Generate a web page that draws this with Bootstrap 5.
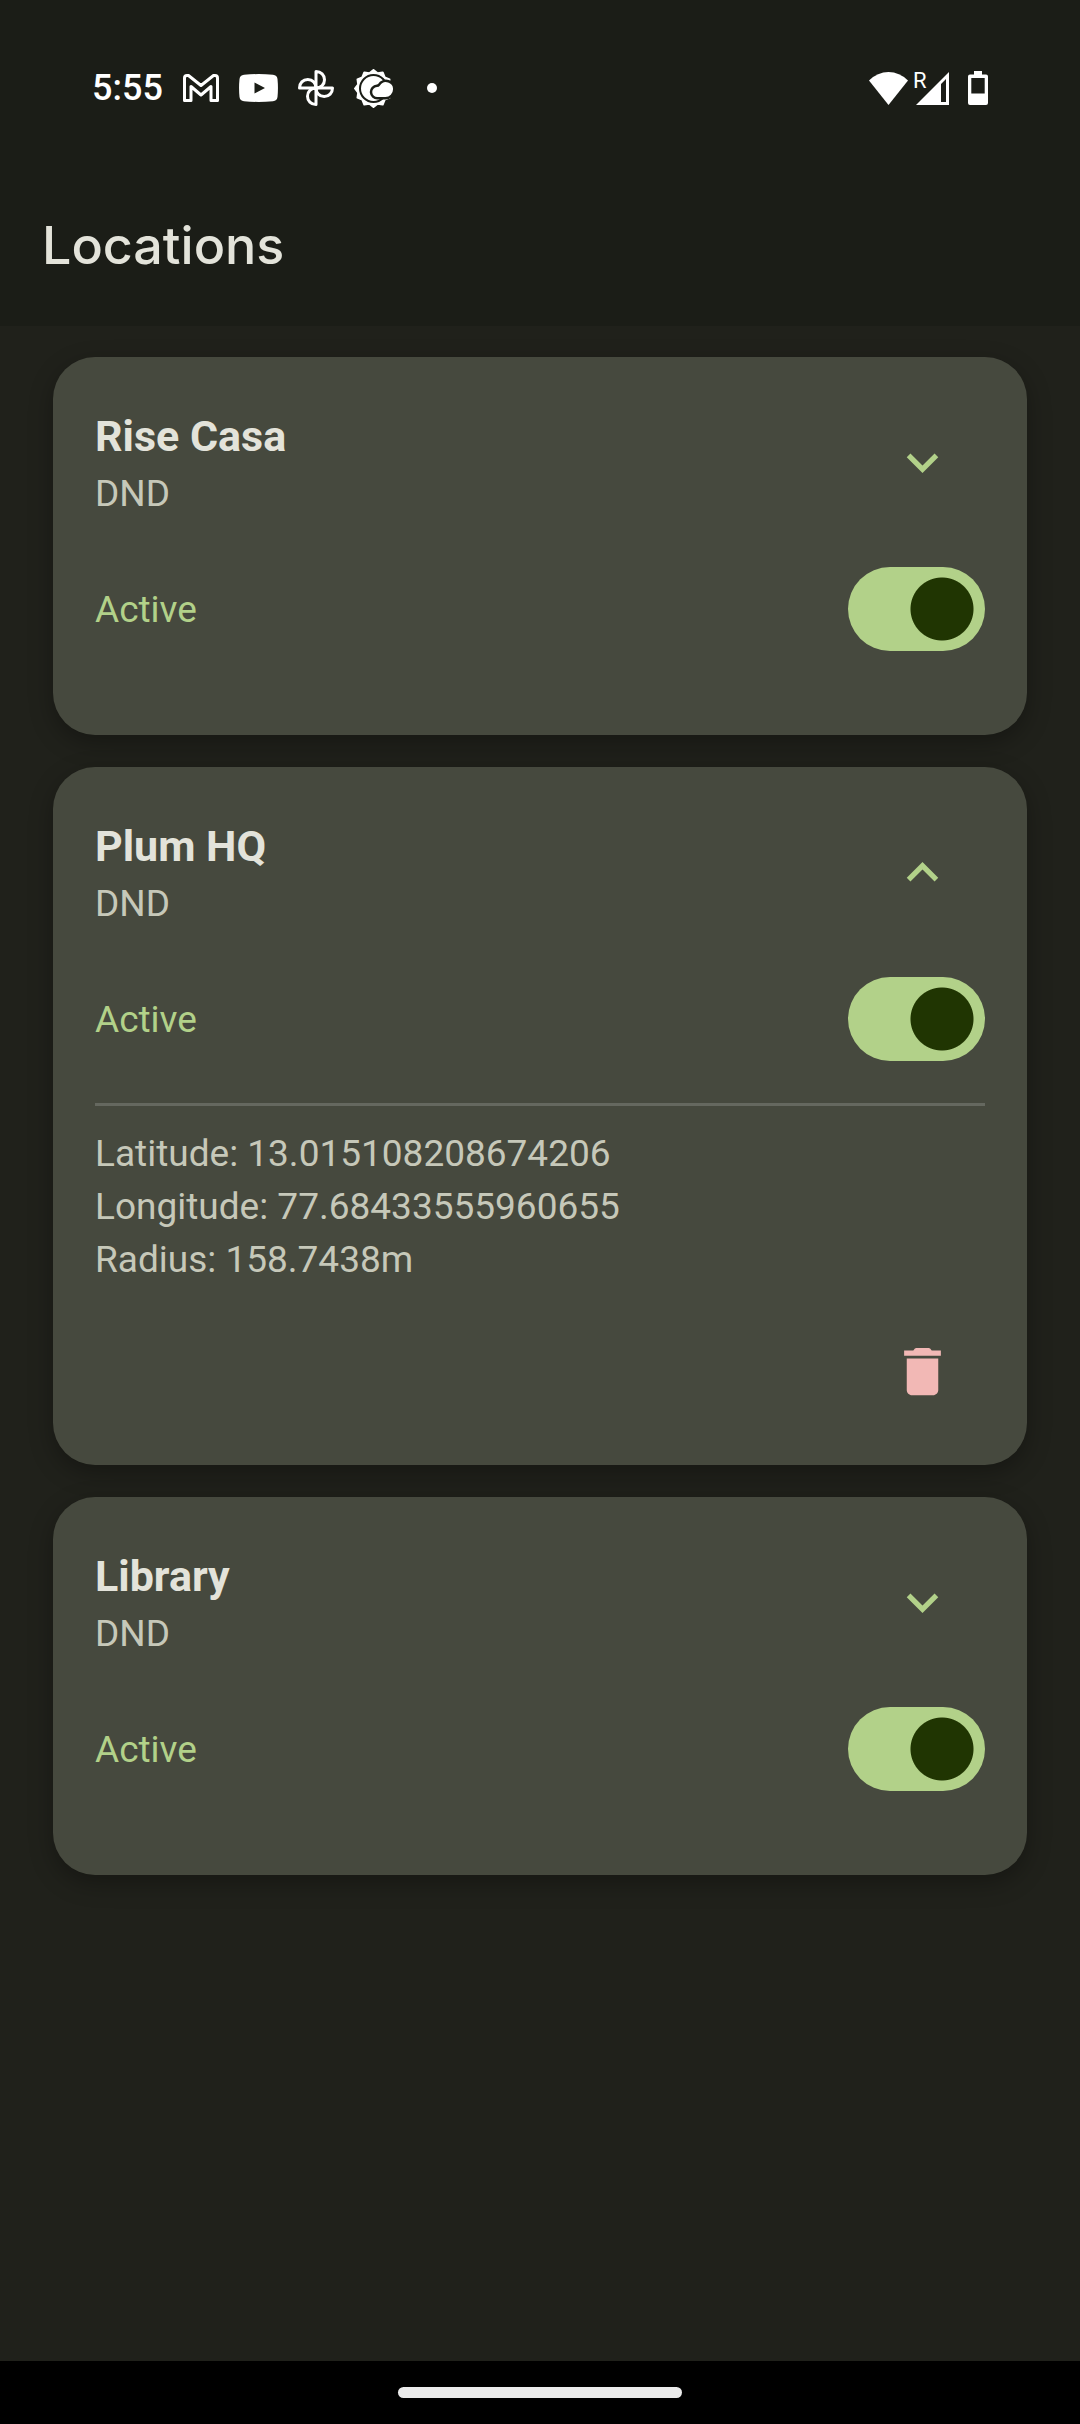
<!DOCTYPE html>
<html lang="en">
<head>
<meta charset="utf-8">
<meta name="viewport" content="width=device-width, initial-scale=1">
<title>Locations</title>
<link rel="stylesheet" href="https://cdn.jsdelivr.net/npm/bootstrap@5.3.0/dist/css/bootstrap.min.css">
<style>
  :root { --accent: #b2d189; --on-accent: #203502; --ink: #e3e3da; --ink-soft: #c6c8b9; }
  body { background: #20211b; color: var(--ink); font-family: Roboto, sans-serif; font-size: 37px; line-height: 53px; }
  .app-top { background: #1b1d17; height: 326px; }
  .status-row { height: 176px; padding: 0 92px; }
  .status-left { gap: 20px; }
  .clock { font: 500 36px/44px Roboto, sans-serif; color: #fff; }
  .more-dot { width: 10px; height: 10px; background: #fff; margin-left: 14px; }
  .status-right { gap: 19px; }
  .radio-icons { gap: 3px; }
  .page-title { font: 500 52px/64px Inter, sans-serif; padding: 38px 42px; }
  .place-list { padding: 31px 53px; gap: 32px; }
  .place { --bs-card-bg: #46493e; --bs-card-color: var(--ink-soft); --bs-card-border-width: 0; --bs-card-border-radius: 42px; --bs-card-spacer-x: 42px; --bs-card-spacer-y: 42px; box-shadow: 0 8px 24px rgba(0,0,0,.3); }
  .place-head { padding-top: 6px; }
  .place-name { font-size: 43px; line-height: 58px; font-weight: 700; color: var(--ink); }
  .place-mode { line-height: 58px; }
  .tool { --bs-btn-border-width: 0; --bs-btn-padding-x: 0; --bs-btn-padding-y: 0; width: 126px; height: 126px; color: var(--accent); line-height: 1; }
  .tool-delete { height: 104px; color: #f2b8b5; margin-top: 33px; }
  .tool:hover { color: var(--ink); }
  .active-row { padding: 42px 0; }
  .active-row label { color: var(--accent); }
  .place .form-switch { padding: 0; min-height: 0; }
  .place .form-check-input { float: none; display: block; width: 137px; height: 84px; margin: 0; border: 0; border-radius: 42px; background-color: #34362e; background-image: radial-gradient(circle at 42px 42px, #919283 31px, transparent 32px); background-position: 0 0; background-size: 100% 100%; }
  .place .form-check-input:checked { background-color: var(--accent); background-image: radial-gradient(circle at 94px 42px, var(--on-accent) 31px, transparent 32px); background-position: 0 0; }
  .details { border-top: 3px solid #65685f; padding-top: 21px; }
  .nav-strip { background: #000; height: 63px; }
  .nav-handle { width: 284px; height: 11px; background: #ebebeb; }
</style>
</head>
<body>
<div class="min-vh-100 d-flex flex-column">
  <header class="app-top">
    <div class="status-row d-flex align-items-center justify-content-between">
      <div class="status-left d-flex align-items-center">
        <span class="clock">5:55</span>
        <svg width="36" height="28" viewBox="0 0 36 28" fill="none" stroke="#fff" stroke-width="3" stroke-linejoin="round" aria-hidden="true"><path d="M1.500 26.500V4Q1.500 1.500 4 1.500H5.500L18 11.500 30.500 1.500H32Q34.500 1.500 34.500 4V26.500H28V12.500L18 21 8 12.500V26.500Z"/></svg>
        <svg width="39" height="28" viewBox="0 0 39 28" aria-hidden="true"><path fill="#fff" fill-rule="evenodd" d="M5 .8Q19.500-.6 34 .8 38 1.200 38.500 5 39.400 14 38.500 23 38 26.800 34 27.200 19.500 28.600 5 27.200 1 26.800.5 23-.4 14 .5 5 1 1.200 5 .8zM15.500 8.500v11L26 14z"/></svg>
        <svg width="36" height="36" viewBox="0 0 36 36" fill="none" stroke="#fff" stroke-width="3" stroke-linejoin="round" aria-hidden="true"><path id="blade" d="M18 18V1.500c5 0 8.500 3.500 8.500 8.300S23 18 18 18z"/><use href="#blade" transform="rotate(90 18 18)"/><use href="#blade" transform="rotate(180 18 18)"/><use href="#blade" transform="rotate(270 18 18)"/></svg>
        <svg width="39" height="39" viewBox="-19.500 -19.500 39 39" aria-hidden="true">
          <path fill="#fff" stroke="#fff" stroke-width="2" stroke-linejoin="round" d="M0-18.500 4.100-15.300 9.200-16 11.200-11.200 16-9.200 15.300-4.100 18.500 0 15.300 4.100 16 9.200 11.200 11.200 9.200 16 4.100 15.300 0 18.500-4.100 15.300-9.200 16-11.200 11.200-16 9.200-15.300 4.100-18.500 0-15.300-4.100-16-9.200-11.200-11.200-9.200-16-4.100-15.300z"/>
          <circle r="13.500" fill="none" stroke="#1b1d17" stroke-width="2"/>
          <path fill="#fff" stroke="#1b1d17" stroke-width="5" paint-order="stroke" d="M4 8.500A5 5 0 0 1 3.500-1.500Q5.500-1.500 6.500-3A7 7 0 0 1 19.500 1 7.500 7.500 0 0 1 12 8.500z"/>
        </svg>
        <span class="more-dot rounded-circle"></span>
      </div>
      <div class="status-right d-flex align-items-center">
        <div class="radio-icons d-flex align-items-center">
          <svg width="39" height="33" viewBox="0 0 39 33" fill="#fff" aria-hidden="true"><path d="M0 8.500Q8.500 0 19.500 0T39 8.500L19.500 33z"/></svg>
          <svg width="38" height="41" viewBox="-4 -4 38 41" fill="#fff" aria-label="Roaming signal"><path fill-rule="evenodd" d="M34 0V33H1zM26 12v18h5V7z"/><text x="-2" y="16" font-family="Roboto" font-size="22">R</text></svg>
        </div>
        <svg width="20" height="34" viewBox="0 0 20 34" fill="#fff" aria-hidden="true"><path fill-rule="evenodd" d="M6 0h8v3.500h4q2 0 2 2V32q0 2-2 2H2q-2 0-2-2V5.500q0-2 2-2h4zM3.300 7v15.500h13.400V7z"/></svg>
      </div>
    </div>
    <h1 class="page-title m-0">Locations</h1>
  </header>

  <main class="place-list d-flex flex-column flex-grow-1">
    <section class="card place">
      <div class="card-body">
        <div class="d-flex align-items-center justify-content-between">
          <div class="place-head">
            <h2 class="place-name m-0">Rise Casa</h2>
            <div class="place-mode">DND</div>
          </div>
          <button class="btn tool" type="button" aria-label="Expand Rise Casa"><svg width="63" height="63" viewBox="0 0 24 24" fill="currentColor"><path d="M16.590 8.590 12 13.170 7.410 8.590 6 10l6 6 6-6z"/></svg></button>
        </div>
        <div class="active-row d-flex align-items-center justify-content-between">
          <label for="rise">Active</label>
          <div class="form-switch"><input class="form-check-input" type="checkbox" role="switch" id="rise" checked></div>
        </div>
      </div>
    </section>

    <section class="card place">
      <div class="card-body">
        <div class="d-flex align-items-center justify-content-between">
          <div class="place-head">
            <h2 class="place-name m-0">Plum HQ</h2>
            <div class="place-mode">DND</div>
          </div>
          <button class="btn tool" type="button" aria-label="Collapse Plum HQ"><svg width="63" height="63" viewBox="0 0 24 24" fill="currentColor"><path d="M12 8l-6 6 1.410 1.410L12 10.830l4.590 4.580L18 14z"/></svg></button>
        </div>
        <div class="active-row d-flex align-items-center justify-content-between">
          <label for="plum">Active</label>
          <div class="form-switch"><input class="form-check-input" type="checkbox" role="switch" id="plum" checked></div>
        </div>
        <div class="details d-flex flex-column">
          <div>Latitude: 13.015108208674206</div>
          <div>Longitude: 77.68433555960655</div>
          <div>Radius: 158.7438m</div>
          <button class="btn tool tool-delete align-self-end" type="button" aria-label="Delete Plum HQ"><svg width="63" height="63" viewBox="0 0 24 24" fill="currentColor"><path d="M6 19c0 1.100.9 2 2 2h8c1.100 0 2-.9 2-2V7H6zM19 4h-3.500l-.6-.8q-.2-.2-.6-.2H9.700q-.4 0-.6.200L8.500 4H5v2h14z"/></svg></button>
        </div>
      </div>
    </section>

    <section class="card place">
      <div class="card-body">
        <div class="d-flex align-items-center justify-content-between">
          <div class="place-head">
            <h2 class="place-name m-0">Library</h2>
            <div class="place-mode">DND</div>
          </div>
          <button class="btn tool" type="button" aria-label="Expand Library"><svg width="63" height="63" viewBox="0 0 24 24" fill="currentColor"><path d="M16.590 8.590 12 13.170 7.410 8.590 6 10l6 6 6-6z"/></svg></button>
        </div>
        <div class="active-row d-flex align-items-center justify-content-between">
          <label for="library">Active</label>
          <div class="form-switch"><input class="form-check-input" type="checkbox" role="switch" id="library" checked></div>
        </div>
      </div>
    </section>
  </main>

  <footer class="nav-strip d-flex align-items-center justify-content-center"><div class="nav-handle rounded-pill"></div></footer>
</div>
<script src="https://cdn.jsdelivr.net/npm/bootstrap@5.3.0/dist/js/bootstrap.bundle.min.js"></script>
</body>
</html>
